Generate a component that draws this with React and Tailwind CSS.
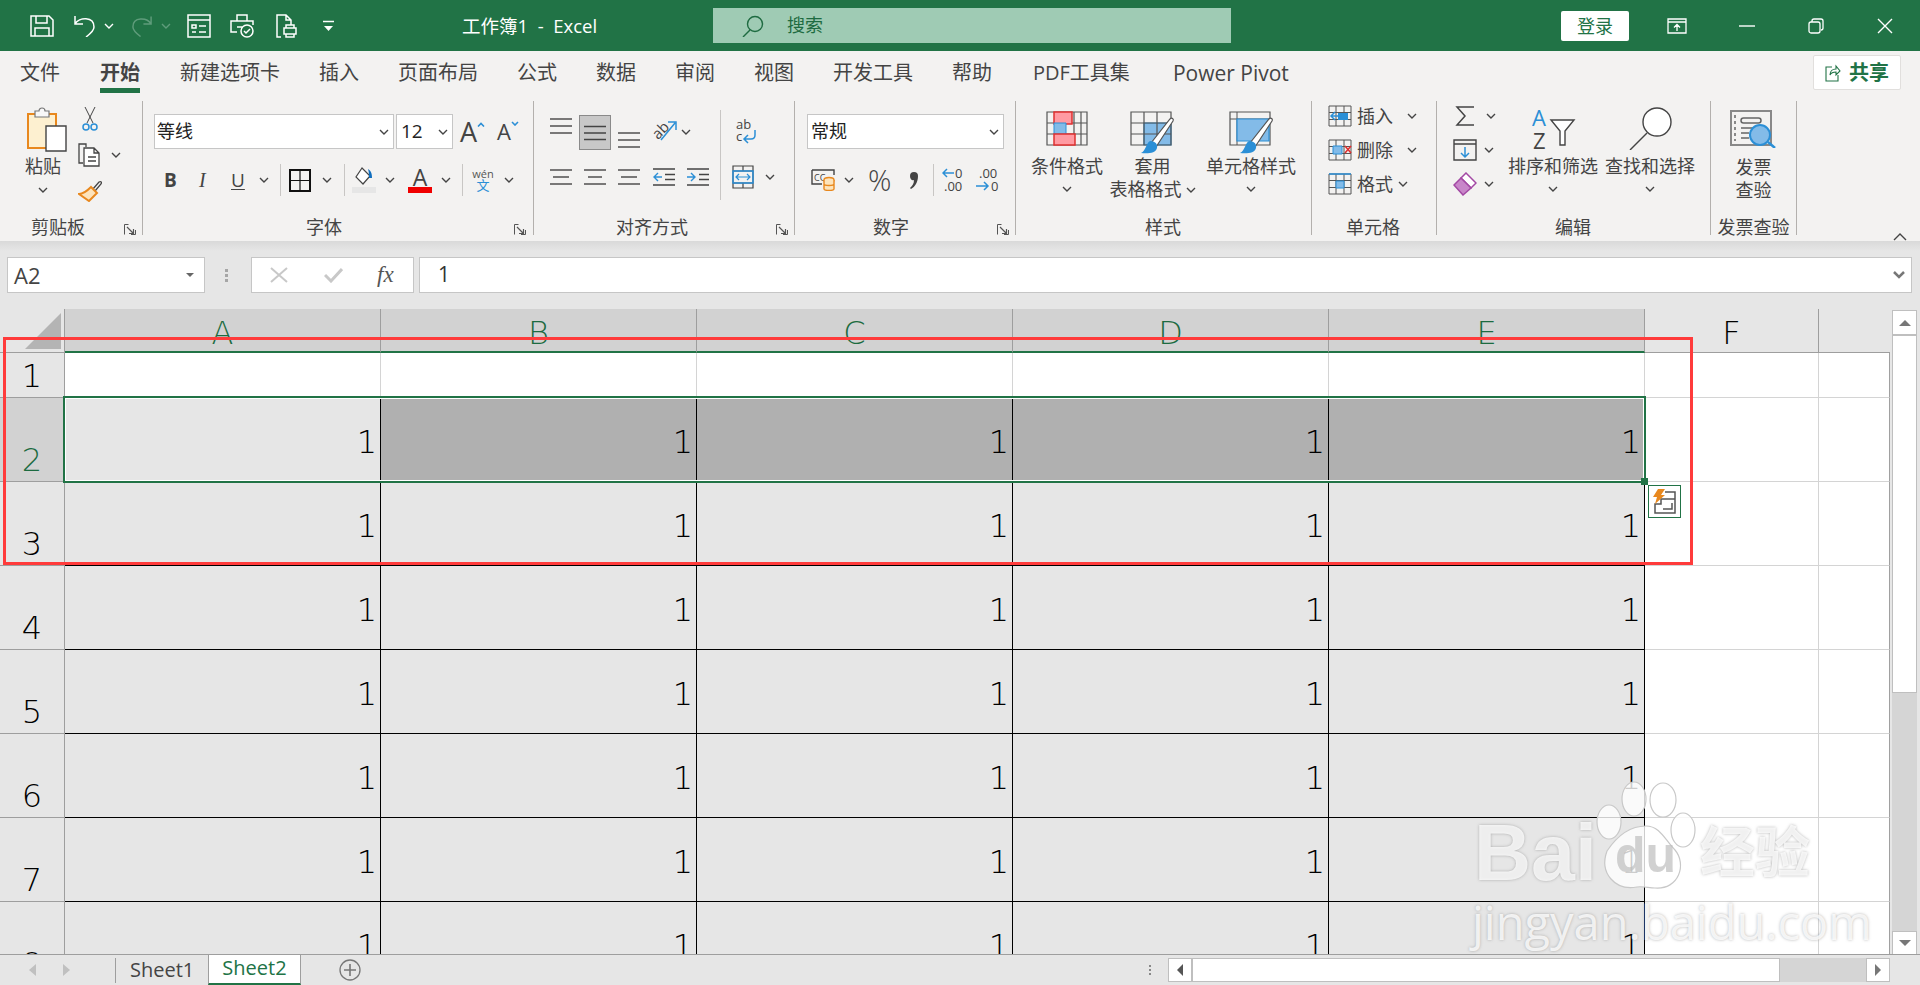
import React from "react";

const columns = ["A", "B", "C", "D", "E"];
const rows = [2, 3, 4, 5, 6, 7, 8];

function Chev({ className = "", color = "#444" }) {
  return (
    <svg width="10" height="6" viewBox="0 0 10 6" className={`shrink-0 ${className}`} fill="none" stroke={color} strokeWidth="1.4">
      <path d="M1 1l4 4 4-4" />
    </svg>
  );
}

function Launcher({ className = "" }) {
  return (
    <svg width="12" height="11" viewBox="0 0 12 11" className={`absolute bottom-0 ${className}`} fill="none" stroke="#555" strokeWidth="1">
      <path d="M.5 10.5v-10h4M.5 10.5M7 10.5h4.5V6" />
      <path d="M3 3l6 6M5 9.500h4.500V5" strokeWidth="1.2" />
    </svg>
  );
}

function Lines({ w = [22, 22, 22] }) {
  return (
    <svg width="22" height="20" viewBox="0 0 22 20" fill="none" stroke="#444" strokeWidth="1.4" className="shrink-0">
      {w.map((l, i) => (
        <path key={i} d={`M${(22 - l) / 2} ${3 + i * 7}h${l}`} />
      ))}
    </svg>
  );
}

function Divider() {
  return <span className="block w-px h-[32px] bg-[#c8c6c4] shrink-0" />;
}

function BigLabel({ children }) {
  return <div className="text-[18px] leading-[23px] text-[#444] whitespace-nowrap text-center">{children}</div>;
}

function GridIcon({ children, w = 24 }) {
  return (
    <svg width={w} height="22" viewBox="0 0 24 22" className="shrink-0" fill="none">
      <g stroke="#555" strokeWidth="1">
        <path d="M1 1h22v20H1zM1 7.500h22M1 14.500h22M8 1v20M16 1v20" />
      </g>
      {children}
    </svg>
  );
}

function Watermark() {
  const glow = "[text-shadow:0_0_3px_rgba(120,120,120,0.55)]";
  return (
    <div className="absolute left-[1470px] top-[780px] w-[350px] h-[170px] pointer-events-none">
      <div className="flex items-start h-[112px]">
        <span className={`mt-[33px] ml-[4px] text-[79px] leading-[79px] font-bold text-white/80 font-['Liberation_Sans',sans-serif] ${glow}`}>Bai</span>
        <svg width="104" height="112" viewBox="0 0 104 112" className="shrink-0 -ml-[4px]">
          <g fill="#fff" fillOpacity="0.8" stroke="#c8c8c8" strokeWidth="1.200">
            <ellipse cx="41" cy="19" rx="12" ry="17" />
            <ellipse cx="70" cy="20" rx="13" ry="17" />
            <ellipse cx="16" cy="42" rx="12" ry="17" />
            <ellipse cx="90" cy="50" rx="12" ry="17" />
            <path d="M53 46c14 0 19 14 29 24 12 14 4 40-20 38-6 0-12-2-18-1-22 4-38-14-30-36 8-12 20-25 39-25z" />
          </g>
          <text x="22" y="92" fontSize="50" fontWeight="700" fill="#bdbdbd" fillOpacity="0.7" fontFamily="Liberation Sans">du</text>
        </svg>
        <span className={`mt-[37px] ml-[3px] text-[55px] leading-[62px] font-bold text-white/80 font-['Noto_Sans_CJK_SC',sans-serif] whitespace-nowrap ${glow}`}>经验</span>
      </div>
      <div className={`mt-[2px] ml-[2px] text-[47px] leading-[56px] text-white/80 whitespace-nowrap font-['Open_Sans',sans-serif] ${glow}`}>jingyan.baidu.com</div>
    </div>
  );
}

function TitleBar() {
  return (
    <div className="h-[51px] bg-[#217346] flex items-center shrink-0 [&>*]:shrink-0">
      <svg width="24" height="22" viewBox="0 0 24 22" className="ml-[30px]" fill="none" stroke="#fff" strokeWidth="1.500">
        <path d="M1 1h18l4 4v16H1zM6 1v7h11V1M5 21v-8h14v8" />
      </svg>
      <svg width="23" height="22" viewBox="0 0 23 22" className="ml-[19px]" fill="none" stroke="#fff" strokeWidth="1.500">
        <path d="M2 1v8h8M2 9c4-7 19-8 19 3 0 4-4 7-8 10" />
      </svg>
      <Chev className="ml-[8px]" color="#fff" />
      <svg width="22" height="22" viewBox="0 0 23 22" className="ml-[17px]" fill="none" stroke="#5f9c7b" strokeWidth="1.500">
        <path d="M21 1v8h-8M21 9C17 2 2 1 2 12c0 4 4 7 8 10" />
      </svg>
      <Chev className="ml-[8px]" color="#5f9c7b" />
      <svg width="24" height="24" viewBox="0 0 24 24" className="ml-[16px]" fill="none" stroke="#fff" strokeWidth="1.500">
        <path d="M1 1h22v22H1zM1 6h22M5 11h4v3H5zM12 12h7M5 18h4M12 18h7" />
      </svg>
      <svg width="24" height="24" viewBox="0 0 24 24" className="ml-[19px]" fill="none" stroke="#fff" strokeWidth="1.500">
        <path d="M7 7V1h10v6M7 18H1V7h22v4M7 13h5" />
        <circle cx="17" cy="17" r="6" />
        <path d="M14 17l2 2 4-4" />
      </svg>
      <svg width="21" height="24" viewBox="0 0 21 24" className="ml-[22px]" fill="none" stroke="#fff" strokeWidth="1.500">
        <path d="M5 23H1V1h9l5 5v5M10 1v5h5M8 14h12v6H8zM10 14v-3h8v3M10 20v3h8v-3" />
      </svg>
      <svg width="13" height="12" viewBox="0 0 13 12" className="ml-[25px]" fill="none" stroke="#fff" strokeWidth="1.500">
        <path d="M1 1.500h11" />
        <path d="M2 6h9l-4.500 5z" fill="#fff" strokeWidth="0" />
      </svg>
      <div className="ml-[127px] w-[136px] text-[18.5px] text-white whitespace-nowrap">工作簿1&nbsp; -&nbsp; Excel</div>
      <div className="ml-[115px] w-[518px] h-[35px] bg-[#9fcbb4] flex items-center">
        <svg width="22" height="22" viewBox="0 0 22 22" className="ml-[29px]" fill="none" stroke="#1e6b41" strokeWidth="1.400">
          <circle cx="13" cy="9" r="7.500" />
          <path d="M8 15l-7 7" />
        </svg>
        <span className="ml-[23px] text-[18px] text-[#1e6b41]">搜索</span>
      </div>
      <button className="ml-[330px] w-[68px] h-[30px] rounded-[2px] bg-white text-[18px] leading-[30px] text-[#217346]">登录</button>
      <svg width="20" height="16" viewBox="0 0 20 16" className="ml-[38px]" fill="none" stroke="#fff" strokeWidth="1.300">
        <path d="M1 1h18v14H1zM1 4h18M10 13V7M7 9.500l3-3 3 3" />
      </svg>
      <svg width="16" height="2" viewBox="0 0 16 2" className="ml-[52px]" fill="none" stroke="#fff" strokeWidth="1.400">
        <path d="M0 1h16" />
      </svg>
      <svg width="16" height="16" viewBox="0 0 16 16" className="ml-[53px]" fill="none" stroke="#fff" strokeWidth="1.300">
        <path d="M1 6a2 2 0 012-2h7a2 2 0 012 2v7a2 2 0 01-2 2H3a2 2 0 01-2-2zM4 4V3a2 2 0 012-2h7a2 2 0 012 2v7a2 2 0 01-2 2" />
      </svg>
      <svg width="16" height="16" viewBox="0 0 16 16" className="ml-[53px]" fill="none" stroke="#fff" strokeWidth="1.400">
        <path d="M1 1l14 14M15 1L1 15" />
      </svg>
    </div>
  );
}

function TabRow() {
  const tabs = ["新建选项卡", "插入", "页面布局", "公式", "数据", "审阅", "视图", "开发工具", "帮助"];
  return (
    <div className="h-[49px] bg-[#f3f2f1] flex pl-5 pt-2 gap-[39px] text-[20px] leading-[28px] text-[#444] shrink-0">
      <span>文件</span>
      <span className="flex flex-col mr-px ml-px">
        <span className="font-bold text-[#444]">开始</span>
        <span className="h-[5px] mt-px bg-[#217346]" />
      </span>
      {tabs.map((t) => (
        <span key={t} className="whitespace-nowrap">{t}</span>
      ))}
      <span className="ml-[2px] whitespace-nowrap">PDF工具集</span>
      <span className="ml-[4px] whitespace-nowrap text-[21px]">Power Pivot</span>
      <button className="ml-auto mr-[19px] -mt-1 w-[88px] h-[35px] rounded-[2px] bg-white border border-[#e1dfdd] flex items-center justify-center gap-2 text-[#217346] font-bold text-[20px]">
        <svg width="16" height="19" viewBox="0 0 16 19" fill="none" stroke="#217346" strokeWidth="1.100">
          <path d="M7 4H1v14h12v-6M5 12c0-4 3-6 6-6V3l4 5-4 4V9c-3 0-5 1-6 3z" />
        </svg>
        共享
      </button>
    </div>
  );
}

function GroupLabel({ className = "", children }) {
  return <div className={`mt-auto -mb-[2px] h-5 leading-5 text-[18px] text-[#444] whitespace-nowrap ${className}`}>{children}</div>;
}

function ClipboardGroup() {
  return (
    <div className="relative w-[143px] h-[134px] border-r border-[#b3b0ad] flex flex-col shrink-0">
      <div className="flex pt-[6px] pl-[22px]">
        <div className="w-[42px] flex flex-col items-center">
          <svg width="40" height="45" viewBox="0 0 40 45" className="self-start ml-[5px]" fill="none">
            <path d="M1 7h28v34H1z" fill="#fdf0d0" stroke="#e8881e" strokeWidth="2" />
            <path d="M8 7V4h4c0-4 6-4 6 0h4v6H8z" fill="#f8f8f8" stroke="#777" strokeWidth="1.200" />
            <path d="M19 19h20v25H19z" fill="#fff" stroke="#444" strokeWidth="1.400" />
          </svg>
          <div className="mt-[3px] text-[18px] leading-[22px] text-[#444]">粘贴</div>
          <Chev className="mt-[10px]" />
        </div>
        <div className="ml-[14px] flex flex-col">
          <svg width="16" height="24" viewBox="0 0 16 24" className="ml-[4px]" fill="none" stroke="#444" strokeWidth="1">
            <path d="M3 0l8 16M13 0L5 16" />
            <circle cx="4" cy="20" r="3" stroke="#2b8fd6" strokeWidth="1.500" />
            <circle cx="12" cy="20" r="3" stroke="#2b8fd6" strokeWidth="1.500" />
          </svg>
          <div className="mt-[12px] flex items-center h-[24px]">
            <svg width="24" height="24" viewBox="0 0 24 24" fill="none" stroke="#444" strokeWidth="1.300">
              <path d="M8 4V1H1v19h4" />
              <path d="M6 5h10l5 5v13H6zM16 5v5h5M10 14h8M10 18h8" fill="#fff" />
            </svg>
            <Chev className="ml-[9px]" />
          </div>
          <svg width="24" height="22" viewBox="0 0 24 22" className="mt-[13px]" fill="none">
            <path d="M15 9l6-7c2-1 3 0 2 2l-6 7" stroke="#444" strokeWidth="1.300" />
            <path d="M13 7l6 6-8 8-10-7c4 0 8-3 12-7z" fill="#fde4bc" stroke="#e8881e" strokeWidth="2" />
          </svg>
        </div>
      </div>
      <GroupLabel className="pl-[31px]">剪贴板</GroupLabel>
      <Launcher className="right-[6px]" />
    </div>
  );
}

function FontGroup() {
  return (
    <div className="relative w-[391px] h-[134px] border-r border-[#b3b0ad] flex flex-col shrink-0">
      <div className="flex items-center pt-[13px] pl-[11px]">
        <div className="w-[240px] h-[35px] bg-white border border-[#c6c6c6] flex items-center justify-between pl-[2px] pr-[4px] text-[18px] text-[#222]">
          等线 <Chev />
        </div>
        <div className="ml-[2px] w-[57px] h-[35px] bg-white border border-[#c6c6c6] flex items-center justify-between pl-[4px] pr-[4px] text-[19px] text-[#222]">
          12 <Chev />
        </div>
        <div className="ml-[7px] w-[24px] flex items-start text-[#444] text-[27px] leading-[27px] font-['Open_Sans',sans-serif]">
          A
          <svg width="8" height="5" viewBox="0 0 8 5" className="shrink-0 mt-[4px]" fill="none" stroke="#2b8fd6" strokeWidth="1.600"><path d="M1 4.500l3-3 3 3" /></svg>
        </div>
        <div className="ml-[13px] w-[21px] flex items-start text-[#444] text-[22px] leading-[27px] font-['Open_Sans',sans-serif]">
          A
          <svg width="8" height="5" viewBox="0 0 8 5" className="shrink-0 mt-[3px]" fill="none" stroke="#2b8fd6" strokeWidth="1.600"><path d="M1 1l3 3 3-3" /></svg>
        </div>
      </div>
      <div className="mt-[16px] h-[30px] flex items-center pl-[21px] text-[#444]">
        <span className="w-[11px] text-[19px] font-bold font-['Open_Sans',sans-serif]">B</span>
        <span className="ml-[24px] w-[10px] text-[20px] italic font-['Liberation_Serif',serif]">I</span>
        <span className="ml-[22px] w-[13px] text-[19px] underline underline-offset-2 font-['Open_Sans',sans-serif]">U</span>
        <Chev className="ml-[15px]" />
        <span className="ml-[11px]"><Divider /></span>
        <svg width="22" height="23" viewBox="0 0 22 23" className="ml-[8px] shrink-0" fill="none" stroke="#111" strokeWidth="2">
          <path d="M1 1h20v21H1z" />
          <path d="M11 1v21M1 11.500h20" strokeWidth="1.200" />
        </svg>
        <Chev className="ml-[11px]" />
        <span className="ml-[12px]"><Divider /></span>
        <svg width="24" height="26" viewBox="0 0 24 26" className="ml-[7px] shrink-0" fill="none">
          <path d="M10 1l-6 9 7 7 7-8z" fill="#fff" stroke="#444" strokeWidth="1.200" />
          <path d="M16 2c4 2 4 7 4 9l-3 0c0-3 0-6-1-9z" fill="#106ebe" />
          <path d="M0 20h24v6H0z" fill="#e6e6e6" />
        </svg>
        <Chev className="ml-[9px]" />
        <div className="ml-[13px] w-[24px] flex flex-col items-center shrink-0">
          <span className="text-[23px] leading-[18px] font-['Open_Sans',sans-serif]">A</span>
          <span className="w-[24px] h-[6px] mt-[1px] bg-[#f00000]" />
        </div>
        <Chev className="ml-[9px]" />
        <span className="ml-[11px]"><Divider /></span>
        <div className="ml-[9px] w-[22px] flex flex-col items-center shrink-0">
          <span className="text-[11px] leading-[11px] text-[#555] font-['Open_Sans',sans-serif]">wén</span>
          <span className="text-[13px] leading-[13px] text-[#2b8fd6]">文</span>
        </div>
        <Chev className="ml-[10px]" />
      </div>
      <GroupLabel className="pl-[163px]">字体</GroupLabel>
      <Launcher className="right-[7px]" />
    </div>
  );
}

function AlignGroup() {
  return (
    <div className="relative w-[261px] h-[134px] border-r border-[#b3b0ad] flex flex-col shrink-0">
      <div className="flex">
        <div className="w-[186px] shrink-0">
          <div className="flex pt-[14px] pl-[16px]">
            <div className="h-[35px] flex items-start pt-[1px]"><Lines /></div>
            <div className="ml-[7px] w-[32px] h-[35px] bg-[#c8c8c8] border border-[#8a8a8a] flex items-center justify-center">
              <svg width="22" height="16" viewBox="0 0 22 16" fill="none" stroke="#444" strokeWidth="1.400"><path d="M0 1.500h22M0 8h22M0 14.500h22" /></svg>
            </div>
            <div className="ml-[7px] h-[35px] flex items-end">
              <Lines />
            </div>
            <svg width="25" height="22" viewBox="0 0 25 22" className="ml-[12px] mt-[4px] shrink-0" fill="none">
              <text x="0" y="17" fontSize="15" fill="#444" transform="rotate(-45 8 12)" fontFamily="Open Sans">ab</text>
              <path d="M9 21L23 4M16 3h8v8" stroke="#2b8fd6" strokeWidth="1.500" />
            </svg>
            <Chev className="ml-[4px] mt-[14px]" />
          </div>
          <div className="flex items-center mt-[17px] pl-[16px]">
            <Lines w={[22, 16, 22]} />
            <span className="ml-[12px]"><Lines w={[22, 14, 22]} /></span>
            <span className="ml-[12px]"><Lines w={[22, 16, 22]} /></span>
            <svg width="22" height="20" viewBox="0 0 22 20" className="ml-[13px] shrink-0" fill="none" stroke="#444" strokeWidth="1.400">
              <path d="M0 2h22M12 7.500h10M12 12.500h10M0 18h22" />
              <path d="M9 10H1M5 6l-4 4 4 4" stroke="#2b8fd6" />
            </svg>
            <svg width="22" height="20" viewBox="0 0 22 20" className="ml-[12px] shrink-0" fill="none" stroke="#444" strokeWidth="1.400">
              <path d="M0 2h22M12 7.500h10M12 12.500h10M0 18h22" />
              <path d="M0 10h8M4 6l4 4-4 4" stroke="#2b8fd6" />
            </svg>
          </div>
        </div>
        <span className="w-px h-[90px] mt-[9px] bg-[#c8c6c4] shrink-0" />
        <div className="flex flex-col">
          <svg width="24" height="26" viewBox="0 0 24 26" className="ml-[14px] mt-[17px]" fill="none">
            <text x="1" y="11" fontSize="13" fill="#444" fontFamily="Open Sans">ab</text>
            <text x="1" y="23" fontSize="13" fill="#444" fontFamily="Open Sans">c</text>
            <path d="M20 12v5c0 3-2 4-4 4H10M13 17l-4 4 4 4" stroke="#2b8fd6" strokeWidth="1.500" />
          </svg>
          <div className="flex items-center mt-[21px] ml-[11px]">
            <svg width="22" height="24" viewBox="0 0 22 24" fill="none" stroke="#444" strokeWidth="1.200">
              <path d="M1 1h20v22H1zM1 6h20M1 18h20M11 1v5M11 18v5" />
              <path d="M1 6h20v12H1z" stroke="#2b8fd6" strokeWidth="1.500" />
              <path d="M4 12h14M7 9l-3 3 3 3M15 9l3 3-3 3" stroke="#2b8fd6" />
            </svg>
            <Chev className="ml-[11px]" />
          </div>
        </div>
      </div>
      <GroupLabel className="pl-[82px]">对齐方式</GroupLabel>
      <Launcher className="right-[6px]" />
    </div>
  );
}

function NumberGroup() {
  return (
    <div className="relative w-[221px] h-[134px] border-r border-[#b3b0ad] flex flex-col shrink-0">
      <div className="pt-[13px] pl-[12px]">
        <div className="w-[197px] h-[35px] bg-white border border-[#c6c6c6] flex items-center justify-between pl-[3px] pr-[4px] text-[18px] text-[#222]">
          常规 <Chev />
        </div>
      </div>
      <div className="mt-[16px] h-[30px] flex items-center pl-[16px] text-[#444]">
        <svg width="24" height="22" viewBox="0 0 24 22" className="shrink-0" fill="none">
          <path d="M1 1h22v5M1 1v14h10" stroke="#444" strokeWidth="1.400" />
          <text x="3" y="12" fontSize="9" fill="#444" fontFamily="Open Sans">CC</text>
          <ellipse cx="18" cy="11" rx="5" ry="2.500" fill="#fde4bc" stroke="#e8881e" strokeWidth="1.400" />
          <path d="M13 11v9c0 2 10 2 10 0v-9M13 15c0 2 10 2 10 0" stroke="#e8881e" strokeWidth="1.400" fill="#fde4bc" />
        </svg>
        <Chev className="ml-[9px]" />
        <span className="ml-[14px] w-[22px] text-[29px] leading-[30px] font-light font-['Open_Sans',sans-serif]">%</span>
        <span className="ml-[17px] w-[14px] flex justify-center">
          <svg width="12" height="20" viewBox="0 0 12 20" fill="#444"><path d="M2 6a4 4 0 118 0c0 6-3 11-7 13l-1-1c2-2 4-4 4-8-2 1-4-1-4-4z" /></svg>
        </span>
        <span className="ml-[12px]"><Divider /></span>
        <svg width="24" height="26" viewBox="0 0 24 26" className="ml-[8px] shrink-0" fill="none">
          <text x="13" y="11" fontSize="13" fill="#444" fontFamily="Open Sans">0</text>
          <text x="2" y="24" fontSize="13" fill="#444" fontFamily="Open Sans">.00</text>
          <path d="M12 6H1M5 2L1 6l4 4" stroke="#2b8fd6" strokeWidth="1.500" />
        </svg>
        <svg width="24" height="26" viewBox="0 0 24 26" className="ml-[10px] shrink-0" fill="none">
          <text x="3" y="11" fontSize="13" fill="#444" fontFamily="Open Sans">.00</text>
          <text x="15" y="24" fontSize="13" fill="#444" fontFamily="Open Sans">0</text>
          <path d="M0 19h12M8 15l4 4-4 4" stroke="#2b8fd6" strokeWidth="1.500" />
        </svg>
      </div>
      <GroupLabel className="pl-[78px]">数字</GroupLabel>
      <Launcher className="right-[6px]" />
    </div>
  );
}

function StylesGroup() {
  const brush = (
    <g>
      <path d="M21 32L40 8c2-2 4 0 3 2L26 36" fill="#fff" stroke="#555" strokeWidth="1.200" />
      <path d="M20 30c5 0 8 3 7 7-1 5-9 6-16 5 5-2 5-10 9-12z" fill="#2b8fd6" />
    </g>
  );
  return (
    <div className="relative w-[296px] h-[134px] border-r border-[#b3b0ad] flex flex-col shrink-0">
      <div className="flex pt-[10px]">
        <div className="ml-[14px] w-[74px] flex flex-col items-center">
          <svg width="42" height="44" viewBox="0 0 42 44" className="shrink-0" fill="none">
            <path d="M1 1h40v33H1zM1 12h40M1 23h40M15 1v33M28 1v33M35 1v33" stroke="#555" strokeWidth="1.200" />
            <path d="M8 1h18v12H8z" fill="#ff9aa2" stroke="#e03030" strokeWidth="1.500" />
            <path d="M8 12h12v11H8z" fill="#83bbe8" stroke="#2b8fd6" strokeWidth="1" />
            <path d="M8 23h21v11H8z" fill="#ff9aa2" stroke="#e03030" strokeWidth="1.500" />
          </svg>
          <BigLabel>条件格式</BigLabel>
          <Chev className="mt-[8px]" />
        </div>
        <div className="ml-[11px] w-[75px] flex flex-col items-center">
          <svg width="45" height="44" viewBox="0 0 45 44" className="shrink-0" fill="none">
            <path d="M14 12h27v22H14z" fill="#83bbe8" stroke="#2b8fd6" strokeWidth="1.200" />
            <path d="M1 1h40v33H1zM1 12h40M1 23h40M14 1v33M27 1v33" stroke="#555" strokeWidth="1.200" />
            {brush}
          </svg>
          <BigLabel>套用</BigLabel>
          <div className="flex items-center">
            <BigLabel>表格格式</BigLabel>
            <Chev className="ml-[4px]" />
          </div>
        </div>
        <div className="ml-[16px] w-[90px] flex flex-col items-center">
          <svg width="45" height="44" viewBox="0 0 45 44" className="shrink-0" fill="none">
            <path d="M1 1h40v33H1z" stroke="#555" strokeWidth="1.200" />
            <path d="M1 8h40M8 1v33" stroke="#555" strokeWidth="1" />
            <path d="M8 8h32v22H8z" fill="#83bbe8" stroke="#2b8fd6" strokeWidth="1.200" />
            {brush}
          </svg>
          <BigLabel>单元格样式</BigLabel>
          <Chev className="mt-[8px]" />
        </div>
      </div>
      <GroupLabel className="pl-[129px]">样式</GroupLabel>
    </div>
  );
}

function CellsGroup() {
  return (
    <div className="relative w-[125px] h-[134px] border-r border-[#b3b0ad] flex flex-col shrink-0">
      <div className="flex flex-col -mt-[2px] text-[18px] text-[#444]">
        <div className="h-[34px] flex items-center pl-[16px]">
          <GridIcon>
            <path d="M10 8h10v7H10z" fill="#2b8fd6" />
            <path d="M14 11H3M7 7l-4 4 4 4" stroke="#2b8fd6" strokeWidth="1.500" />
          </GridIcon>
          <span className="ml-[5px] w-[36px]">插入</span>
          <Chev className="ml-[14px]" />
        </div>
        <div className="h-[34px] flex items-center pl-[16px]">
          <GridIcon>
            <path d="M5 7h9v8H5z" fill="#83bbe8" stroke="#2b8fd6" strokeWidth="1" />
            <path d="M17 7l6 7M23 7l-6 7" stroke="#e03030" strokeWidth="1.600" />
          </GridIcon>
          <span className="ml-[5px] w-[36px]">删除</span>
          <Chev className="ml-[14px]" />
        </div>
        <div className="h-[34px] flex items-center pl-[16px]">
          <GridIcon>
            <path d="M8 8h8v7H8z" fill="#83bbe8" stroke="#2b8fd6" />
            <path d="M1 1h22" stroke="#2b8fd6" strokeWidth="1.500" />
          </GridIcon>
          <span className="ml-[5px] w-[36px]">格式</span>
          <Chev className="ml-[5px]" />
        </div>
      </div>
      <GroupLabel className="pl-[34px]">单元格</GroupLabel>
    </div>
  );
}

function EditGroup() {
  return (
    <div className="relative w-[274px] h-[134px] border-r border-[#b3b0ad] flex flex-col shrink-0">
      <div className="flex">
        <div className="ml-[16px] w-[55px] flex flex-col -mt-[2px]">
          <div className="h-[34px] flex items-center pl-[2px]">
            <svg width="19" height="22" viewBox="0 0 19 22" fill="none" stroke="#444" strokeWidth="1.500"><path d="M19 2H2l8 9-8 9h17" /></svg>
            <Chev className="ml-[12px]" />
          </div>
          <div className="h-[34px] flex items-center">
            <svg width="24" height="22" viewBox="0 0 24 22" fill="none" stroke="#444" strokeWidth="1.400">
              <path d="M1 1h22v20H1zM1 5h22" />
              <path d="M12 8v10M8 14l4 4 4-4" stroke="#2b8fd6" strokeWidth="1.500" />
            </svg>
            <Chev className="ml-[7px]" />
          </div>
          <div className="h-[34px] flex items-center">
            <svg width="24" height="24" viewBox="0 0 24 24" fill="none" stroke="#a349a4" strokeWidth="1.500">
              <path d="M13 1l10 10-5 5L8 6z" fill="#fff" />
              <path d="M8 6L1 13l9 10 8-7z" fill="#c886c9" />
            </svg>
            <Chev className="ml-[7px]" />
          </div>
        </div>
        <div className="w-[90px] flex flex-col items-center pt-[7px]">
          <svg width="44" height="41" viewBox="0 0 44 41" className="shrink-0 ml-px" fill="none">
            <text x="0" y="18" fontSize="22" fill="#2b8fd6" fontFamily="Open Sans">A</text>
            <text x="1" y="41" fontSize="22" fill="#444" fontFamily="Open Sans">Z</text>
            <path d="M19 12h23l-9 11v14h-5V23z" fill="#fff" stroke="#444" strokeWidth="1.400" />
          </svg>
          <div className="mt-[6px]"><BigLabel>排序和筛选</BigLabel></div>
          <Chev className="mt-[8px]" />
        </div>
        <div className="ml-[7px] w-[90px] flex flex-col items-center pt-[6px]">
          <svg width="44" height="43" viewBox="0 0 44 43" className="shrink-0" fill="none" stroke="#444" strokeWidth="1.400">
            <circle cx="29" cy="15" r="14" fill="#fff" />
            <path d="M19 26L2 43" />
          </svg>
          <div className="mt-[5px]"><BigLabel>查找和选择</BigLabel></div>
          <Chev className="mt-[8px]" />
        </div>
      </div>
      <GroupLabel className="pl-[118px]">编辑</GroupLabel>
    </div>
  );
}

function InvoiceGroup() {
  return (
    <div className="relative w-[86px] h-[134px] border-r border-[#b3b0ad] flex flex-col items-center shrink-0">
      <svg width="47" height="38" viewBox="0 0 47 38" className="mt-[9px] shrink-0" fill="none">
        <path d="M1 1h40v34H1z" fill="#f3f2f1" stroke="#888" strokeWidth="2" />
        <path d="M5 5v26" stroke="#888" strokeWidth="2" strokeDasharray="3 3" />
        <rect x="11" y="8" width="20" height="5" rx="2.500" stroke="#666" strokeWidth="1.500" />
        <path d="M11 18h12M11 23h8M11 28h8" stroke="#666" strokeWidth="1.500" />
        <circle cx="30" cy="25" r="10" fill="#83bbe8" stroke="#2b8fd6" strokeWidth="2" />
        <path d="M38 32l7 6" stroke="#2b8fd6" strokeWidth="2.500" />
      </svg>
      <div className="mt-[8px]"><BigLabel>发票</BigLabel></div>
      <BigLabel>查验</BigLabel>
      <GroupLabel>发票查验</GroupLabel>
    </div>
  );
}

function FormulaBar() {
  return (
    <div className="h-[68px] shrink-0 flex pt-4 pl-[7px] bg-[linear-gradient(#d9d9d9,#e6e6e6_10px)]">
      <div className="w-[198px] h-[36px] bg-white border border-[#c6c6c6] flex items-center justify-between pl-[6px] pr-[10px] text-[22px] text-[#444] font-['Open_Sans',sans-serif]">
        A2
        <svg width="8" height="4" viewBox="0 0 8 4" fill="#666"><path d="M0 0h8L4 4z" /></svg>
      </div>
      <div className="ml-[20px] w-[4px] h-[36px] flex flex-col justify-center gap-[2px]">
        <span className="size-[3px] bg-[#a6a6a6]" />
        <span className="size-[3px] bg-[#a6a6a6]" />
        <span className="size-[3px] bg-[#a6a6a6]" />
      </div>
      <div className="ml-[22px] w-[163px] h-[36px] bg-white border border-[#c6c6c6] flex items-center pl-[18px]">
        <svg width="18" height="16" viewBox="0 0 18 16" fill="none" stroke="#c8c8c8" strokeWidth="2"><path d="M1 1l16 14M17 1L1 15" /></svg>
        <svg width="19" height="16" viewBox="0 0 19 16" className="ml-[36px]" fill="none" stroke="#c8c8c8" strokeWidth="3"><path d="M1 8l6 6L18 2" /></svg>
        <span className="ml-[34px] text-[23px] italic text-[#555] font-['Liberation_Serif',serif]">fx</span>
      </div>
      <div className="ml-[5px] w-[1493px] h-[36px] bg-white border border-[#c6c6c6] flex items-center justify-between pl-[18px] pr-[6px] text-[21px] text-[#333] font-['Open_Sans',sans-serif]">
        1
        <svg width="12" height="8" viewBox="0 0 12 8" fill="none" stroke="#777" strokeWidth="2.500"><path d="M1 1l5 5 5-5" /></svg>
      </div>
    </div>
  );
}

function Sheet() {
  const number = "font-['DejaVu_Sans',sans-serif] font-extralight text-[32px] leading-none";
  return (
    <div className="relative w-[1890px] h-[645px] overflow-hidden shrink-0">
      <div className={`grid grid-cols-[65px_316px_316px_316px_316px_316px_174px_71px] grid-rows-[44px_45px_84px_84px_84px_84px_84px_84px_84px] text-black ${number}`}>
        <div className="bg-[#e6e6e6] border-r border-b border-[#9e9e9e] flex items-end justify-end pb-[3px] pr-[3px]">
          <svg width="36" height="36" viewBox="0 0 36 36"><path d="M36 0v36H0z" fill="#b4b4b4" /></svg>
        </div>
        {columns.map((c) => (
          <div key={c} className="bg-[#d2d2d2] border-r border-[#9e9e9e] border-b-2 border-b-[#217346] flex items-end justify-center pb-[2px] text-[#1c6b40]">{c}</div>
        ))}
        <div className="bg-[#e6e6e6] border-r border-b border-[#9e9e9e] flex items-end justify-center pb-[3px]">F</div>
        <div className="bg-[#e6e6e6] border-b border-[#9e9e9e]" />

        <div className="bg-[#e6e6e6] border-r border-b border-[#9e9e9e] flex items-end justify-center pb-[5px]">1</div>
        {columns.map((c) => (
          <div key={c} className="bg-white border-r border-b border-[#d4d4d4]" />
        ))}
        <div className="bg-white border-r border-b border-[#d4d4d4]" />
        <div className="bg-white border-r border-b border-r-[#a0a0a0] border-b-[#d4d4d4]" />

        {rows.map((r) => (
          <React.Fragment key={r}>
            <div className={`border-r border-b border-[#9e9e9e] flex items-end justify-center pb-[5px] ${r === 2 ? "bg-[#d2d2d2] text-[#1c6b40]" : "bg-[#e6e6e6]"}`}>{r}</div>
            {columns.map((c) => (
              <div key={c} className={`border-r border-b border-black flex items-center justify-end pr-[3px] pt-[5px] ${r === 2 && c !== "A" ? "bg-[#b0b0b0]" : "bg-[#e6e6e6]"}`}>1</div>
            ))}
            <div className="bg-white border-r border-b border-[#d4d4d4]" />
            <div className="bg-white border-r border-b border-r-[#a0a0a0] border-b-[#d4d4d4]" />
          </React.Fragment>
        ))}
      </div>

      {/* selection */}
      <div className="absolute left-[63px] top-[87px] w-[1583px] h-[87px] border-2 border-[#217346] shadow-[inset_0_0_0_1px_#fff]" />
      <div className="absolute left-[1641px] top-[169px] size-[7px] bg-[#217346]" />
      <div className="absolute left-[1648px] top-[176px] w-[33px] h-[33px] bg-white border border-[#217346] flex items-center justify-center">
        <svg width="25" height="25" viewBox="0 0 25 25" fill="none">
          <path d="M3 24V15h6V10h14v14zM13 3h10v7M11 20h9v-6" stroke="#555" strokeWidth="1.500" />
          <path d="M6 0h7L9 6h4L3 15l2-7H1z" fill="#e8881e" />
        </svg>
      </div>
    </div>
  );
}

function VScroll() {
  return (
    <div className="ml-[2px] mt-px w-[25px] h-[645px] flex flex-col bg-[#d5d5d5]">
      <div className="h-[25px] bg-white border border-[#bfbfbf] flex items-center justify-center">
        <svg width="12" height="6" viewBox="0 0 12 6" fill="#777"><path d="M6 0l6 6H0z" /></svg>
      </div>
      <div className="h-[358px] bg-white border border-[#bfbfbf]" />
      <div className="mt-auto h-[24px] bg-white border border-[#bfbfbf] flex items-center justify-center">
        <svg width="12" height="6" viewBox="0 0 12 6" fill="#777"><path d="M0 0h12L6 6z" /></svg>
      </div>
    </div>
  );
}

function SheetBar() {
  return (
    <div className="h-[31px] shrink-0 border-t border-[#9e9e9e] bg-[#e6e6e6] flex items-center text-[20px] font-['Open_Sans',sans-serif]">
      <svg width="7" height="12" viewBox="0 0 7 12" className="ml-[29px]" fill="#c0c0c0"><path d="M7 0v12L0 6z" /></svg>
      <svg width="7" height="12" viewBox="0 0 7 12" className="ml-[27px]" fill="#c0c0c0"><path d="M0 0v12l7-6z" /></svg>
      <span className="ml-[45px] w-px h-[25px] bg-[#9e9e9e]" />
      <span className="ml-[14px] w-[78px] text-[#444] leading-[28px]">Sheet1</span>
      <div className="w-[93px] h-[30px] self-start bg-white border-x border-[#9e9e9e] border-b-2 border-b-[#217346] text-center text-[#217346] leading-[26px]">Sheet2</div>
      <svg width="22" height="22" viewBox="0 0 22 22" className="ml-[38px]" fill="none" stroke="#777" strokeWidth="1.300">
        <circle cx="11" cy="11" r="10" />
        <path d="M11 5v12M5 11h12" strokeWidth="1.600" />
      </svg>
      <div className="ml-[788px] w-[3px] flex flex-col gap-[2px]">
        <span className="size-[2px] bg-[#888]" />
        <span className="size-[2px] bg-[#888]" />
        <span className="size-[2px] bg-[#888]" />
      </div>
      <div className="ml-[16px] w-[722px] h-[24px] flex bg-[#d5d5d5]">
        <div className="w-[24px] bg-white border border-[#bfbfbf] flex items-center justify-center">
          <svg width="6" height="12" viewBox="0 0 6 12" fill="#555"><path d="M6 0v12L0 6z" /></svg>
        </div>
        <div className="w-[588px] bg-white border border-[#bfbfbf]" />
        <div className="ml-auto w-[24px] bg-white border border-[#bfbfbf] flex items-center justify-center">
          <svg width="6" height="12" viewBox="0 0 6 12" fill="#777"><path d="M0 0v12l6-6z" /></svg>
        </div>
      </div>
    </div>
  );
}

export default function App() {
  return (
    <div className="relative w-[1920px] h-[985px] overflow-hidden flex flex-col bg-[#e6e6e6] font-['Open_Sans','Noto_Sans_CJK_SC',sans-serif]">
      <TitleBar />
      <TabRow />
      <div className="h-[141px] bg-[#f3f2f1] flex pt-px shrink-0">
        <ClipboardGroup />
        <FontGroup />
        <AlignGroup />
        <NumberGroup />
        <StylesGroup />
        <CellsGroup />
        <EditGroup />
        <InvoiceGroup />
        <div className="flex-1 flex justify-end items-end pr-[13px]">
          <svg width="14" height="8" viewBox="0 0 14 8" fill="none" stroke="#444" strokeWidth="1.400"><path d="M1 7l6-6 6 6" /></svg>
        </div>
      </div>
      <FormulaBar />
      <div className="flex flex-1 min-h-0">
        <Sheet />
        <VScroll />
      </div>
      <SheetBar />

      {/* red annotation box */}
      <div className="absolute left-[3px] top-[337px] w-[1690px] h-[228px] border-[3px] border-[#ff3b3b] pointer-events-none" />
      <Watermark />
    </div>
  );
}
